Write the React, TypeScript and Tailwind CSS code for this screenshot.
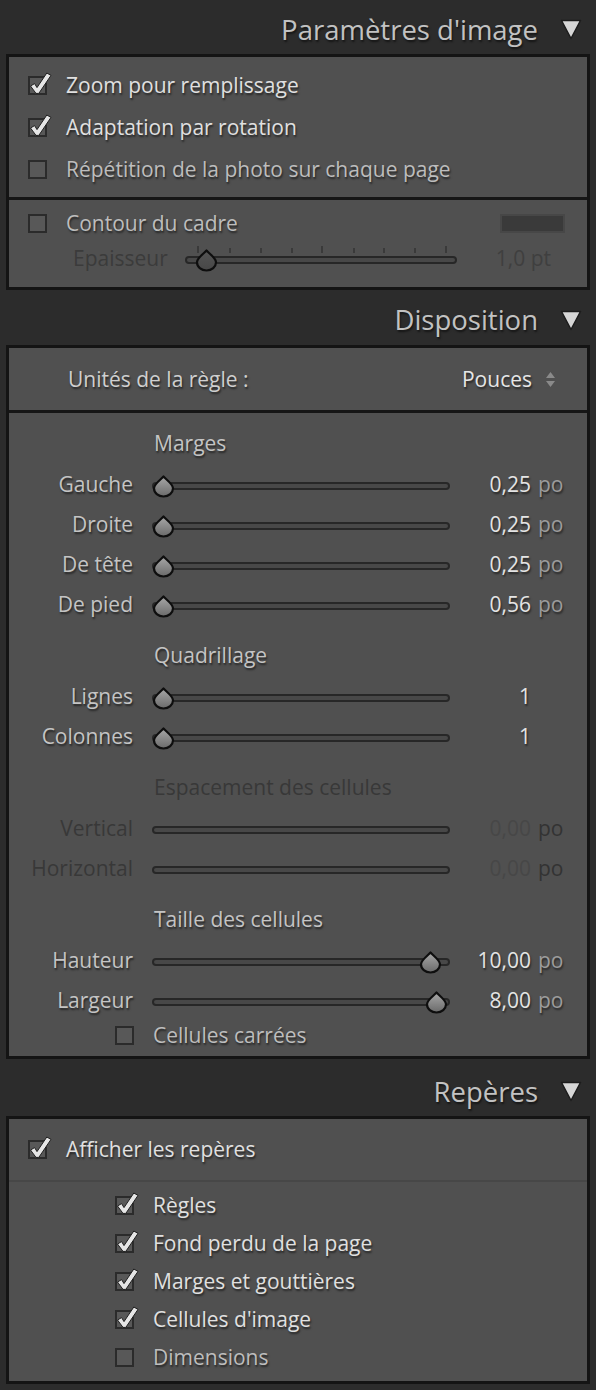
import React from "react";

const shadow = "[text-shadow:1px_2px_2px_rgba(0,0,0,0.55)]";

function Triangle() {
  return (
    <svg width="22" height="21" viewBox="0 0 22 21" className="shrink-0">
      <path d="M1.5 1.5 L20.5 1.5 L11 19.5 Z" fill="#d6d6d6" stroke="#1c1c1c" strokeWidth="1.5" strokeLinejoin="round" />
    </svg>
  );
}

function Header({ title, h }: { title: string; h: string }) {
  return (
    <div className={`flex items-center justify-end pr-[14px] pt-[5px] ${h}`}>
      <span className={`text-[27.5px] leading-none text-[#c2c2c2] ${shadow}`}>{title}</span>
      <div className="ml-[22px]">
        <Triangle />
      </div>
    </div>
  );
}

function Check({ checked }: { checked?: boolean }) {
  return (
    <div className="relative w-[19px] h-[19px] shrink-0 border-2 border-[#2b2b2b] bg-[#585858]">
      {checked && (
        <svg viewBox="0 0 19 19" className="absolute -left-[2px] -top-[2px] w-[19px] h-[19px] overflow-visible">
          <path
            d="M2.5 10 L6.6 7.6 L9 11.6 L18.8 -3 L23 -0.6 L10.8 17.4 L8 17.4 Z"
            fill="#e6e6e6"
            stroke="#1e1e1e"
            strokeWidth="1"
            strokeLinejoin="round"
          />
        </svg>
      )}
    </div>
  );
}

function CheckRow({ label, checked, h, pl }: { label: string; checked?: boolean; h: string; pl: string }) {
  return (
    <div className={`flex items-center gap-[19px] ${h} ${pl}`}>
      <Check checked={checked} />
      <span className={`text-[21px] leading-none ${checked ? "text-[#e0e0e0]" : "text-[#bdbdbd]"} ${shadow}`}>
        {label}
      </span>
    </div>
  );
}

function Thumb({ left, dark }: { left: number; dark?: boolean }) {
  const id = dark ? "thumbDark" : "thumbLight";
  return (
    <svg width="23" height="23" viewBox="0 0 23 23" className="absolute top-0" style={{ left }}>
      <defs>
        <linearGradient id={id} x1="0" y1="0" x2="0" y2="1">
          <stop offset="0" stopColor={dark ? "#555555" : "#a8a8a8"} />
          <stop offset="1" stopColor={dark ? "#474747" : "#6a6a6a"} />
        </linearGradient>
      </defs>
      <path
        d="M11.5 1.5 C13.5 4 21 9 21 13.2 A9.5 8.3 0 0 1 2 13.2 C2 9 9.5 4 11.5 1.5 Z"
        fill={`url(#${id})`}
        stroke="#0e0e0e"
        strokeWidth="2.2"
        strokeLinejoin="round"
      />
    </svg>
  );
}

function Track({ thumb }: { thumb?: number }) {
  return (
    <div className="relative w-[298px] h-[22px] mt-[4px]">
      <div className="absolute left-0 right-0 top-[7px] h-[8px] rounded-full border-2 border-[#272727] bg-[#484848]" />
      {thumb !== undefined && <Thumb left={thumb} />}
    </div>
  );
}

function SliderRow({
  label,
  value,
  unit,
  thumb,
  disabled,
}: {
  label: string;
  value: string;
  unit?: string;
  thumb?: number;
  disabled?: boolean;
}) {
  return (
    <div className="flex items-center h-[40px] text-[21px] leading-none">
      <div className={`w-[124px] text-right pt-[1px] ${disabled ? "text-[#383838]" : `text-[#c4c4c4] ${shadow}`}`}>{label}</div>
      <div className="ml-[19px]">
        <Track thumb={thumb} />
      </div>
      <div className={`w-[81px] text-right pt-[1px] ${disabled ? "text-[#474747]" : `text-[#e4e4e4] ${shadow}`}`}>{value}</div>
      <div className={`w-[38px] pl-[7px] pt-[1px] ${disabled ? "text-[#333333]" : `text-[#9c9c9c] ${shadow}`}`}>{unit}</div>
    </div>
  );
}

function GroupTitle({ title, disabled }: { title: string; disabled?: boolean }) {
  return (
    <div
      className={`flex items-center h-[42px] pl-[145px] pt-[1px] text-[21px] leading-none ${
        disabled ? "text-[#383838]" : `text-[#c4c4c4] ${shadow}`
      }`}
    >
      {title}
    </div>
  );
}

function Panel({ children }: { children: React.ReactNode }) {
  return <div className="mx-[6px] border-[3px] border-[#141414] bg-[#505050]">{children}</div>;
}

export default function App() {
  const ticks = [12, 44, 75, 106, 136, 168, 198, 229, 260];
  return (
    <div className="w-[596px] h-[1390px] bg-[#2c2c2c] font-['Open_Sans',sans-serif] overflow-hidden">
      <Header title="Paramètres d'image" h="h-[54px]" />
      <Panel>
        <div className="py-[7px]">
          <CheckRow label="Zoom pour remplissage" checked h="h-[42px]" pl="pl-[19px]" />
          <CheckRow label="Adaptation par rotation" checked h="h-[42px]" pl="pl-[19px]" />
          <CheckRow label="Répétition de la photo sur chaque page" h="h-[42px]" pl="pl-[19px]" />
        </div>
        <div className="h-[3px] bg-[#161616]" />
        <div className="pt-[6px] pb-[11px]">
          <div className="flex items-center h-[34px]">
            <CheckRow label="Contour du cadre" h="h-[34px]" pl="pl-[19px]" />
            <div className="ml-auto mr-[22px] w-[65px] h-[19px] bg-[#3a3a3a] border-2 border-[#474747]" />
          </div>
          <div className="flex items-center h-[36px] text-[21px] leading-none">
            <div className="w-[176px] pl-[64px] pt-[1px] text-[#3b3b3b]">Epaisseur</div>
            <div className="relative w-[272px] h-[24px]">
              {ticks.map((t, i) => (
                <div
                  key={t}
                  className={`absolute w-[1.5px] bg-[#3a3a3a] ${i === 0 || i === 4 || i === 8 ? "top-0 h-[7px]" : "top-[2px] h-[5px]"}`}
                  style={{ left: t }}
                />
              ))}
              <div className="absolute left-0 right-0 top-[10px] h-[8px] rounded-full border-2 border-[#272727] bg-[#484848]" />
              <div className="absolute left-0 top-[3px] w-full h-[22px]">
                <Thumb left={10} dark />
              </div>
            </div>
            <div className="w-[94px] text-right pt-[1px] text-[#3f3f3f]">1,0 pt</div>
          </div>
        </div>
      </Panel>

      <Header title="Disposition" h="h-[55px]" />
      <Panel>
        <div className="flex items-center h-[62px] pl-[59px] pr-[31px] text-[21px] leading-none">
          <span className={`text-[#cfcfcf] pt-[1px] ${shadow}`}>Unités de la règle :</span>
          <span className={`ml-auto text-[#e6e6e6] pt-[1px] ${shadow}`}>Pouces</span>
          <svg width="11" height="17" viewBox="0 0 11 17" className="ml-[13px]">
            <path d="M5.5 1 L10 7 L1 7 Z" fill="#8a8a8a" />
            <path d="M5.5 16 L10 10 L1 10 Z" fill="#8a8a8a" />
          </svg>
        </div>
        <div className="h-[3px] bg-[#161616]" />
        <div className="pt-[11px] pb-[6px]">
          <div className="-mt-[2px]">
            <GroupTitle title="Marges" />
          </div>
          <SliderRow label="Gauche" value="0,25" unit="po" thumb={0} />
          <SliderRow label="Droite" value="0,25" unit="po" thumb={0} />
          <SliderRow label="De tête" value="0,25" unit="po" thumb={0} />
          <SliderRow label="De pied" value="0,56" unit="po" thumb={0} />
          <div className="mt-[10px]">
            <GroupTitle title="Quadrillage" />
          </div>
          <SliderRow label="Lignes" value="1" thumb={0} />
          <SliderRow label="Colonnes" value="1" thumb={0} />
          <div className="mt-[10px]">
            <GroupTitle title="Espacement des cellules" disabled />
          </div>
          <SliderRow label="Vertical" value="0,00" unit="po" disabled />
          <SliderRow label="Horizontal" value="0,00" unit="po" disabled />
          <div className="mt-[10px]">
            <GroupTitle title="Taille des cellules" />
          </div>
          <SliderRow label="Hauteur" value="10,00" unit="po" thumb={267} />
          <SliderRow label="Largeur" value="8,00" unit="po" thumb={273} />
          <CheckRow label="Cellules carrées" h="h-[30px]" pl="pl-[106px]" />
        </div>
      </Panel>

      <Header title="Repères" h="h-[57px] pt-[8px]" />
      <Panel>
        <CheckRow label="Afficher les repères" checked h="h-[61px]" pl="pl-[19px]" />
        <div className="h-[2px] bg-[#474747]" />
        <div className="pt-[4px] pb-[5px]">
          <CheckRow label="Règles" checked h="h-[38px]" pl="pl-[106px]" />
          <CheckRow label="Fond perdu de la page" checked h="h-[38px]" pl="pl-[106px]" />
          <CheckRow label="Marges et gouttières" checked h="h-[38px]" pl="pl-[106px]" />
          <CheckRow label="Cellules d'image" checked h="h-[38px]" pl="pl-[106px]" />
          <CheckRow label="Dimensions" h="h-[38px]" pl="pl-[106px]" />
        </div>
      </Panel>
    </div>
  );
}
